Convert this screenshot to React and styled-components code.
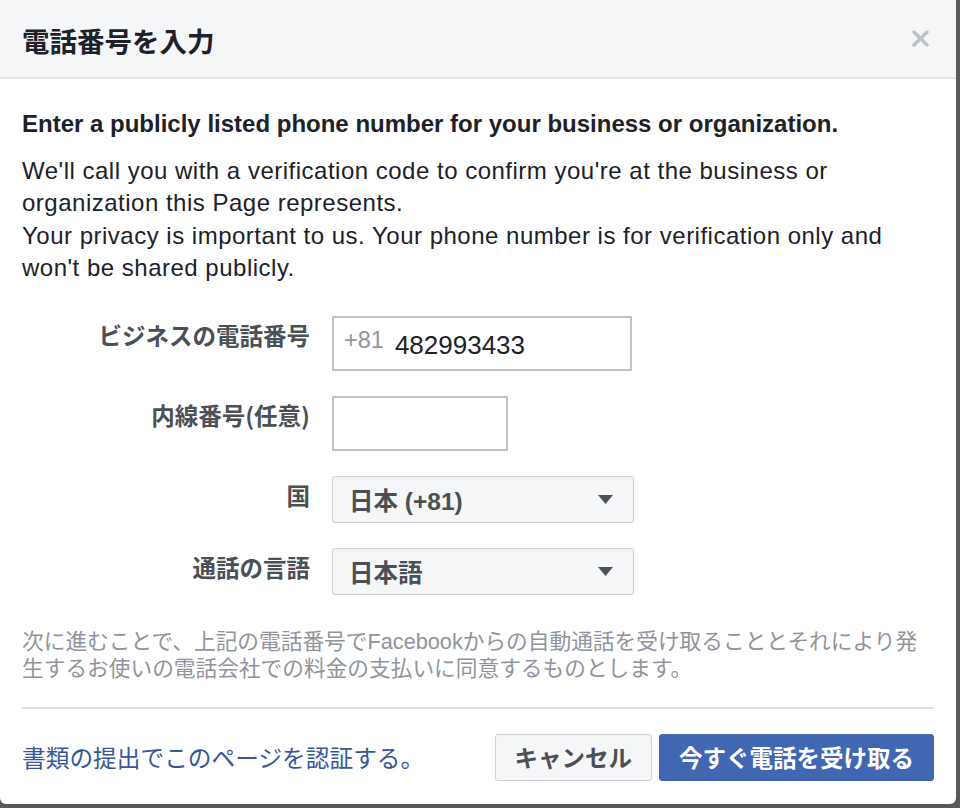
import React from "react";
import styled, { createGlobalStyle } from "styled-components";

const GlobalStyle = createGlobalStyle`
  html, body {
    margin: 0;
    padding: 0;
    background: #5a5a5a;
  }
  body {
    font-family: "Liberation Sans", "Noto Sans CJK JP", sans-serif;
    color: #1d2129;
  }
`;

const Dialog = styled.div`
  width: 956px;
  height: 804px;
  background: #fff;
  border-radius: 0 0 6px 6px;
  display: flex;
  flex-direction: column;
  overflow: hidden;
`;

const Header = styled.div`
  height: 77px;
  flex-shrink: 0;
  display: flex;
  align-items: center;
  justify-content: space-between;
  padding: 0 24px 0 22px;
  background: #f5f6f7;
  border-bottom: 2px solid #e5e5e5;
`;

const Title = styled.h1`
  margin: 0;
  font-family: "Noto Sans CJK JP", sans-serif;
  font-size: 27.5px;
  font-weight: 700;
  color: #1d2129;
  position: relative;
  top: 1px;
`;

const CloseButton = styled.button`
  width: 24px;
  height: 24px;
  padding: 0;
  border: 0;
  background: transparent;
  display: flex;
  align-items: center;
  justify-content: center;
  cursor: pointer;
`;

const Body = styled.div`
  padding: 29px 22px 0;
  flex: 1;
  display: flex;
  flex-direction: column;
`;

const Lead = styled.p`
  margin: 0 0 15px;
  font-size: 24px;
  font-weight: 700;
  line-height: 32px;
`;

const Text = styled.p`
  margin: 0;
  font-size: 24px;
  line-height: 32.4px;
  letter-spacing: 0.5px;
`;

const Form = styled.div`
  display: grid;
  grid-template-columns: 288px auto;
  column-gap: 22px;
  row-gap: 25px;
  margin-top: 31px;
  align-items: start;
`;

const Label = styled.label`
  text-align: right;
  font-family: "Noto Sans CJK JP", sans-serif;
  font-size: 23.5px;
  font-weight: 700;
  color: #4b4f56;
  line-height: 34px;
  padding-top: 2px;
`;

const Input = styled.div`
  box-sizing: border-box;
  width: ${(p) => p.$width}px;
  height: 55px;
  border: 2px solid #bdc3cf;
  background: #fff;
  display: flex;
  align-items: center;
  padding: 0 10px;
  gap: 11px;
`;

const Prefix = styled.span`
  color: #90949c;
  font-size: 23.5px;
  position: relative;
  top: -3px;
`;

const Value = styled.span`
  color: #1d2129;
  font-size: 26px;
  position: relative;
  top: 2px;
`;

const Select = styled.div`
  box-sizing: border-box;
  width: 302px;
  height: 47px;
  border: 1.5px solid #ccd0d5;
  border-radius: 3px;
  background: #f5f6f7;
  display: flex;
  align-items: center;
  justify-content: space-between;
  padding: 0 20px 0 16px;
  font-size: 24.5px;
  font-weight: 700;
  color: #4b4f56;
`;

const Notice = styled.p`
  margin: 33px 0 0;
  font-family: "Liberation Sans", "Noto Sans CJK JP", sans-serif;
  font-size: 21.7px;
  line-height: 27px;
  color: #90949c;
`;

const NoticeLine = styled.span`
  display: block;
  height: 27px;
`;

const Divider = styled.hr`
  margin: 25px 0 0;
  border: 0;
  border-top: 2px solid #dddfe2;
`;

const Footer = styled.div`
  display: flex;
  align-items: center;
  justify-content: space-between;
  margin-top: 25px;
`;

const Link = styled.a`
  font-family: "Noto Sans CJK JP", sans-serif;
  font-size: 23.7px;
  color: #365899;
  text-decoration: none;
`;

const Actions = styled.div`
  display: flex;
  gap: 7px;
`;

const Button = styled.button`
  box-sizing: border-box;
  height: 47px;
  padding: 0 19px;
  border-radius: 3px;
  border: 1.5px solid ${(p) => (p.$primary ? "#4267b2" : "#ccd0d5")};
  background: ${(p) => (p.$primary ? "#4267b2" : "#f5f6f7")};
  color: ${(p) => (p.$primary ? "#fff" : "#4b4f56")};
  font-family: "Noto Sans CJK JP", sans-serif;
  font-size: 23.5px;
  font-weight: 700;
  cursor: pointer;
`;

const Caret = () => (
  <svg width="15" height="9" viewBox="0 0 15 9">
    <path d="M0 0 H15 L7.5 9 Z" fill="#4b4f56" />
  </svg>
);

const App = () => (
  <>
    <GlobalStyle />
    <Dialog>
      <Header>
        <Title>電話番号を入力</Title>
        <CloseButton aria-label="close">
          <svg width="17" height="17" viewBox="0 0 17 17">
            <path
              d="M2 2 L15 15 M15 2 L2 15"
              stroke="#bec3c9"
              strokeWidth="3.5"
              strokeLinecap="round"
            />
          </svg>
        </CloseButton>
      </Header>
      <Body>
        <Lead>
          Enter a publicly listed phone number for your business or
          organization.
        </Lead>
        <Text>
          We'll call you with a verification code to confirm you're at the
          business or
          <br />
          organization this Page represents.
          <br />
          Your privacy is important to us. Your phone number is for
          verification only and
          <br />
          won't be shared publicly.
        </Text>
        <Form>
          <Label>ビジネスの電話番号</Label>
          <Input $width={300}>
            <Prefix>+81</Prefix>
            <Value>482993433</Value>
          </Input>
          <Label>内線番号(任意)</Label>
          <Input $width={176} />
          <Label>国</Label>
          <Select>
            <span>日本 (+81)</span>
            <Caret />
          </Select>
          <Label>通話の言語</Label>
          <Select>
            <span>日本語</span>
            <Caret />
          </Select>
        </Form>
        <Notice>
          <NoticeLine>
            次に進むことで、上記の電話番号でFacebookからの自動通話を受け取ることとそれにより発
          </NoticeLine>
          <NoticeLine>
            生するお使いの電話会社での料金の支払いに同意するものとします。
          </NoticeLine>
        </Notice>
        <Divider />
        <Footer>
          <Link href="#">書類の提出でこのページを認証する。</Link>
          <Actions>
            <Button>キャンセル</Button>
            <Button $primary>今すぐ電話を受け取る</Button>
          </Actions>
        </Footer>
      </Body>
    </Dialog>
  </>
);

export default App;
